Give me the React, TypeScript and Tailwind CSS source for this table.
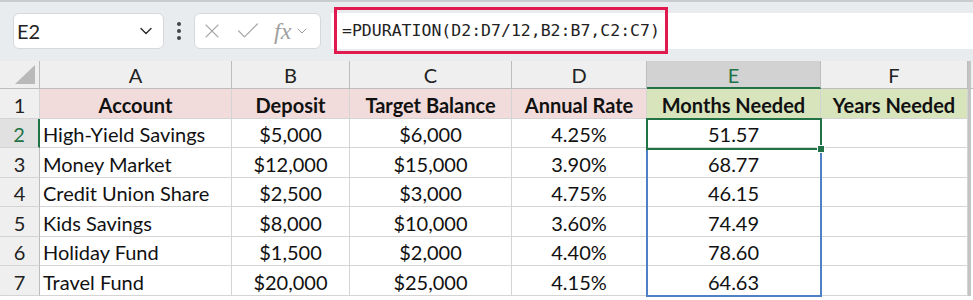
import { ChevronDown, X, Check } from "lucide-react";

const cols = ["A", "B", "C", "D", "E", "F"];

const rows = [
  ["High-Yield Savings", "$5,000", "$6,000", "4.25%", "51.57"],
  ["Money Market", "$12,000", "$15,000", "3.90%", "68.77"],
  ["Credit Union Share", "$2,500", "$3,000", "4.75%", "46.15"],
  ["Kids Savings", "$8,000", "$10,000", "3.60%", "74.49"],
  ["Holiday Fund", "$1,500", "$2,000", "4.40%", "78.60"],
  ["Travel Fund", "$20,000", "$25,000", "4.15%", "64.63"],
];

const headers = ["Account", "Deposit", "Target Balance", "Annual Rate", "Months Needed", "Years Needed"];

const cell = "border-r border-b border-[#d4d4d4] flex items-center pt-[2px]";

function Toolbar() {
  return (
    <div className="relative h-[61px] bg-[#e9ecef] border-t-2 border-[#c9cccf]">
      <div className="flex items-center pt-[11px]">
        <div className="ml-[13px] flex h-[36px] w-[151px] items-center justify-between rounded-md border border-[#d6d8db] bg-white pl-[3px] pr-[7px]">
          <span className="text-[20px] text-[#222]">E2</span>
          <ChevronDown size={20} strokeWidth={1.8} className="text-[#333]" />
        </div>
        <div className="mx-[13px] flex flex-col gap-[3px]">
          <span className="h-[4px] w-[4px] rounded-full bg-[#444]" />
          <span className="h-[4px] w-[4px] rounded-full bg-[#444]" />
          <span className="h-[4px] w-[4px] rounded-full bg-[#444]" />
        </div>
        <div className="flex h-[36px] w-[127px] items-center rounded-md border border-[#d6d8db] bg-white pl-[5px]">
          <X size={24} strokeWidth={1.1} className="text-[#a8a8a8]" />
          <Check size={28} strokeWidth={1.1} className="ml-[10px] text-[#a8a8a8]" />
          <span className="ml-[12px] font-['Liberation_Serif',serif] text-[24px] italic leading-none text-[#a0a0a0]">fx</span>
          <ChevronDown size={16} strokeWidth={1.5} className="ml-[3px] text-[#9a9a9a]" />
        </div>
        <div className="ml-[10px] flex h-[36px] flex-1 items-center bg-white pl-[11px]">
          <span className="font-['DejaVu_Sans_Mono',monospace] text-[16.5px] text-[#222]">
            =PDURATION(D2:D7/12,B2:B7,C2:C7)
          </span>
        </div>
      </div>
      <div className="absolute left-[334px] top-[5px] h-[47px] w-[334px] border-[3px] border-[#e0194f]" />
    </div>
  );
}

export default function App() {
  return (
    <div className="h-[300px] w-[973px] overflow-hidden bg-white font-['Lato',sans-serif] text-[20px] text-[#111]">
      <Toolbar />
      <div className="relative grid grid-cols-[40px_192px_118px_162px_135px_174px_147px_1fr]">
        <div className="relative h-[28px] border-r border-b border-[#bdbdbd] bg-[#efefef]">
          <svg className="absolute right-[4px] bottom-[4px]" width="20" height="19" viewBox="0 0 20 19">
            <polygon points="20,0 20,19 0,19" fill="#b9b9b9" />
          </svg>
        </div>
        {cols.map((c) =>
          c === "E" ? (
            <div key={c} className="flex h-[28px] items-center justify-center border-r border-b-2 border-r-[#bdbdbd] border-b-[#217346] bg-[#d2d2d2] pt-[1px] text-[#217346]">
              {c}
            </div>
          ) : (
            <div key={c} className="flex h-[28px] items-center justify-center border-r border-b border-[#bdbdbd] bg-[#efefef] pt-[1px] text-[#222]">
              {c}
            </div>
          )
        )}
        <div className="h-[28px] border-l-[3px] border-b border-l-[#c4c4c4] border-b-[#bdbdbd] bg-[#efefef]" />

        <div className={`${cell} h-[30px] justify-center bg-[#efefef] text-[#222]`}>1</div>
        {headers.map((h, i) => (
          <div
            key={h}
            className={`${cell} h-[30px] justify-center font-bold ${i < 4 ? "bg-[#f2dcdb]" : "bg-[#d8e4bc]"}`}
          >
            {h}
          </div>
        ))}
        <div className="h-[30px] border-l-[3px] border-l-[#c4c4c4] bg-white" />

        {rows.map((r, ri) => {
          const h = ri % 2 === 0 ? "h-[29px]" : "h-[30px]";
          const sel = ri === 0;
          return [
            <div
              key={`n${ri}`}
              className={`${h} flex items-center justify-center border-b border-[#d4d4d4] pt-[2px] ${
                sel ? "border-r-2 border-r-[#217346] bg-[#e1e1e1] text-[#217346]" : "border-r border-r-[#bdbdbd] bg-[#efefef] text-[#222]"
              }`}
            >
              {ri + 2}
            </div>,
            ...r.map((v, ci) => (
              <div key={`c${ri}-${ci}`} className={`${cell} ${h} ${ci === 0 ? "pl-[3px]" : "justify-center"}`}>
                {v}
              </div>
            )),
            <div key={`f${ri}`} className={`${cell} ${h}`} />,
            <div key={`g${ri}`} className={`${h} border-l-[3px] border-l-[#c4c4c4] bg-white`} />,
          ];
        })}

        <div className="pointer-events-none absolute left-[646px] top-[57px] h-[179px] w-[176px] border-2 border-[#4f7fc5]" />
        <div className="pointer-events-none absolute left-[646px] top-[57px] h-[32px] w-[176px] border-2 border-[#217346]" />
        <div className="pointer-events-none absolute left-[817px] top-[84px] h-[8px] w-[8px] border border-white bg-[#217346]" />
      </div>
    </div>
  );
}
